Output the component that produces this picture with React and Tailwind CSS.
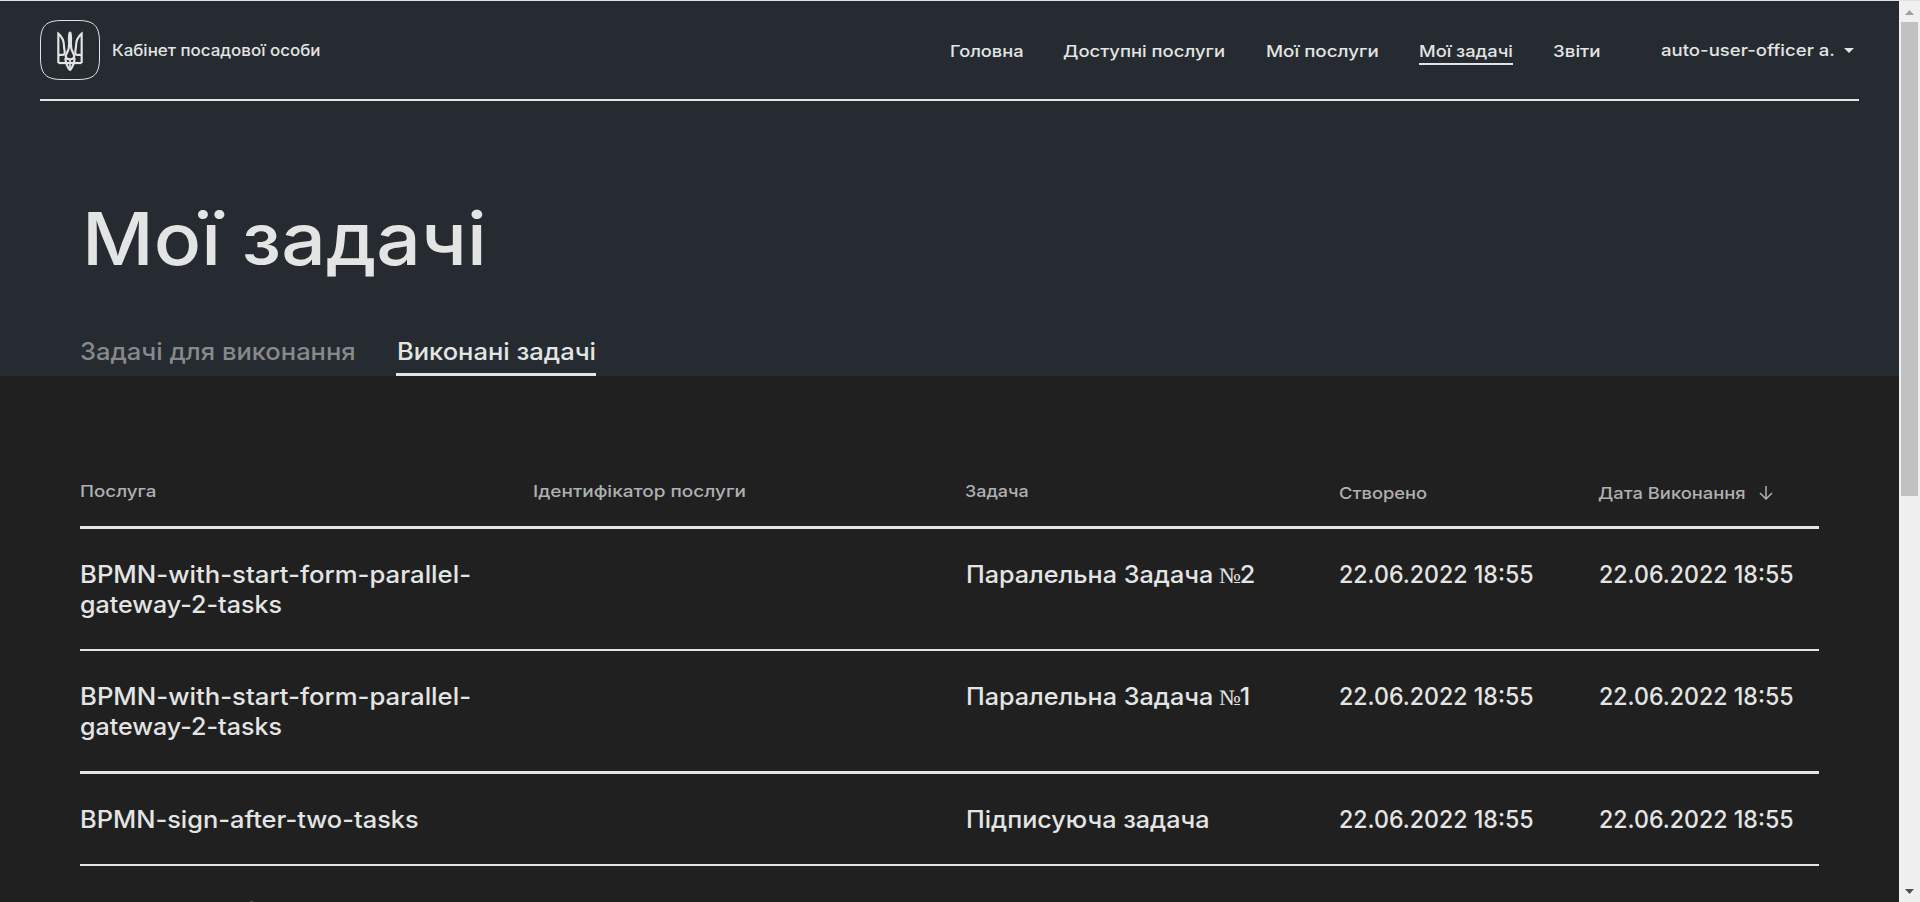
const navItems = [
  { label: "Головна", box: "w-[74px] pl-px", cls: "scale-x-[1.105]" },
  { label: "Доступні послуги", box: "w-[163px]", cls: "scale-x-[1.118]" },
  { label: "Мої послуги", box: "w-[113px]", cls: "scale-x-[1.137]" },
  { label: "Мої задачі", box: "w-[94px]", cls: "scale-x-[1.105]", active: true },
  { label: "Звіти", box: "w-[48px]", cls: "scale-x-[1.135]" },
];

const DATE = "22.06.2022 18:55";

const gateway = [
  { text: "BPMN-with-start-form-parallel-", cls: "scale-x-[1.071]" },
  { text: "gateway-2-tasks", cls: "scale-x-[1.043]" },
];
const sign = [{ text: "BPMN-sign-after-two-tasks", cls: "scale-x-[1.059]" }];

const rows = [
  { service: gateway, task: "Паралельна Задача", number: "2", line: "border-b-2" },
  { service: gateway, task: "Паралельна Задача", number: "1", line: "border-b-3" },
  { service: sign, task: "Підписуюча задача", line: "border-b-2" },
  { service: sign, task: "", line: "border-b-2" },
];

function Wide({ className = "", children }) {
  return <span className={`block w-max origin-left ${className}`}>{children}</span>;
}

function Logo() {
  const half = (
    <>
      <path d="M4 97 V9 C16 19 21 32 21 47 C21 58 26 62 22 70 C19 76 10 70 4 74" />
      <path d="M39 4 C34 14 36 26 36.500 38 C37 54 34 60 29 68 C23 78 28 86 39 86" />
      <path d="M25 82 C26 100 32 110 39 119" />
      <path d="M4 97 H39" />
    </>
  );
  return (
    <svg className="size-[60px] shrink-0" viewBox="0 0 60 60" fill="none" stroke="#e3e5e4">
      <path d="M22 .5 H38 C54 .5 59.5 6 59.5 22 V38 C59.5 54 54 59.5 38 59.5 H22 C6 59.5 .5 54 .5 38 V22 C.5 6 6 .5 22 .5 Z" />
      <g transform="translate(17 10.7) scale(.3333)" strokeWidth="6.5">
        {half}
        <g transform="translate(78 0) scale(-1 1)">{half}</g>
        <path d="M39 84 V119" strokeWidth="5" />
      </g>
    </svg>
  );
}

function Scrollbar() {
  return (
    <div className="flex w-[21px] shrink-0 flex-col items-center bg-[#f0f0f0]">
      <svg className="mt-[9px] h-[5px] w-[9px]" viewBox="0 0 9 5">
        <path d="M0 5 L4.5 0 L9 5 Z" fill="#a0a0a0" />
      </svg>
      <div className="mt-[7px] h-[474px] w-[17px] bg-[#c1c1c1]" />
      <svg className="mt-auto mb-2 h-[5px] w-[9px]" viewBox="0 0 9 5">
        <path d="M0 0 L4.5 5 L9 0 Z" fill="#505050" />
      </svg>
    </div>
  );
}

function Header() {
  return (
    <header className="mx-10 flex h-[100px] items-start border-b-2 border-[#e3e5e4]">
      <div className="flex pt-[19px]">
        <Logo />
        <div className="mt-[21px] ml-[12px] text-[15.5px] leading-5">
          <Wide className="scale-x-[1.092]">Кабінет посадової особи</Wide>
        </div>
      </div>
      <nav className="mt-10 ml-auto flex gap-10 text-[16.5px] leading-5">
        {navItems.map(({ label, box, cls, active }) => (
          <a key={label} className={`h-[24px] ${box} ${active ? "border-b-2 border-[#e3e5e4]" : ""}`}>
            <Wide className={cls}>{label}</Wide>
          </a>
        ))}
      </nav>
      <div className="mt-[39px] ml-[60px] flex w-[198px] text-[16.5px] leading-5">
        <div className="w-[183px]">
          <Wide className="scale-x-[1.125]">auto-user-officer а.</Wide>
        </div>
        <svg className="mt-2 h-[5px] w-[10px]" viewBox="0 0 10 5">
          <path d="M0 0 H10 L5 5 Z" fill="#e3e5e4" />
        </svg>
      </div>
    </header>
  );
}

const columns = "grid grid-cols-[453px_433px_373px_260px_220px]";

export default function App() {
  return (
    <div className="flex h-[902px] w-[1920px] overflow-hidden whitespace-nowrap border-t border-[#dce3e2] bg-[#202020] font-['Inter','Liberation_Sans',sans-serif] font-medium text-[#e3e5e4]">
      <div className="flex h-[901px] min-w-0 flex-1 flex-col overflow-hidden">
        <section className="h-[375px] shrink-0 bg-[#252b30]">
          <Header />
          <h1 className="mt-[98px] ml-[82px] text-[73px] leading-[79px]">
            <Wide className="scale-x-[1.076]">Мої задачі</Wide>
          </h1>
          <div className="mt-[58px] ml-20 flex gap-10 text-2xl leading-[30px]">
            <div className="w-[276px] pt-px text-[#87898b]">
              <Wide className="scale-x-[1.063]">Задачі для виконання</Wide>
            </div>
            <div className="h-10 w-[200px] border-b-3 border-[#e3e5e4] pt-px pl-px">
              <Wide className="scale-x-[1.063]">Виконані задачі</Wide>
            </div>
          </div>
        </section>

        <main className="mx-20 pt-[105px]">
          <div className={`${columns} h-[48px] border-b-3 border-[#e3e5e4] text-[16.5px] leading-5 text-[#afb0b0]`}>
            <Wide className="scale-x-[1.137]">Послуга</Wide>
            <Wide className="scale-x-[1.15]">Ідентифікатор послуги</Wide>
            <Wide className="-ml-px scale-x-[1.085]">Задача</Wide>
            <div className="pt-0.5">
              <Wide className="scale-x-[1.11]">Створено</Wide>
            </div>
            <div className="flex pt-0.5">
              <div className="w-[158px]">
                <Wide className="-ml-px scale-x-[1.112]">Дата Виконання</Wide>
              </div>
              <svg className="mt-[3px] ml-[1.5px] h-[14px] w-[14px]" viewBox="0 0 14 14" fill="none" stroke="#afb0b0" strokeWidth="1.5">
                <path d="M7 0 V13 M1 7 L7 13 L13 7" />
              </svg>
            </div>
          </div>
          {rows.map(({ service, task, number, line }, i) => (
            <div key={i} className={`${columns} ${line} border-[#e3e5e4] pt-[31px] pb-[29px] text-2xl leading-[30px]`}>
              <div>
                {service.map(({ text, cls }) => (
                  <Wide key={text} className={cls}>{text}</Wide>
                ))}
              </div>
              <span />
              <Wide className="scale-x-[1.048]">
                {task}
                {number && (
                  <>
                    {" "}
                    <span className="-ml-px font-['Liberation_Serif'] text-[22px] leading-none font-normal tracking-[-1px]">№</span>
                    {number}
                  </>
                )}
              </Wide>
              <Wide className="scale-x-[0.965]">{DATE}</Wide>
              <Wide className="scale-x-[0.965]">{DATE}</Wide>
            </div>
          ))}
        </main>
      </div>
      <Scrollbar />
    </div>
  );
}
